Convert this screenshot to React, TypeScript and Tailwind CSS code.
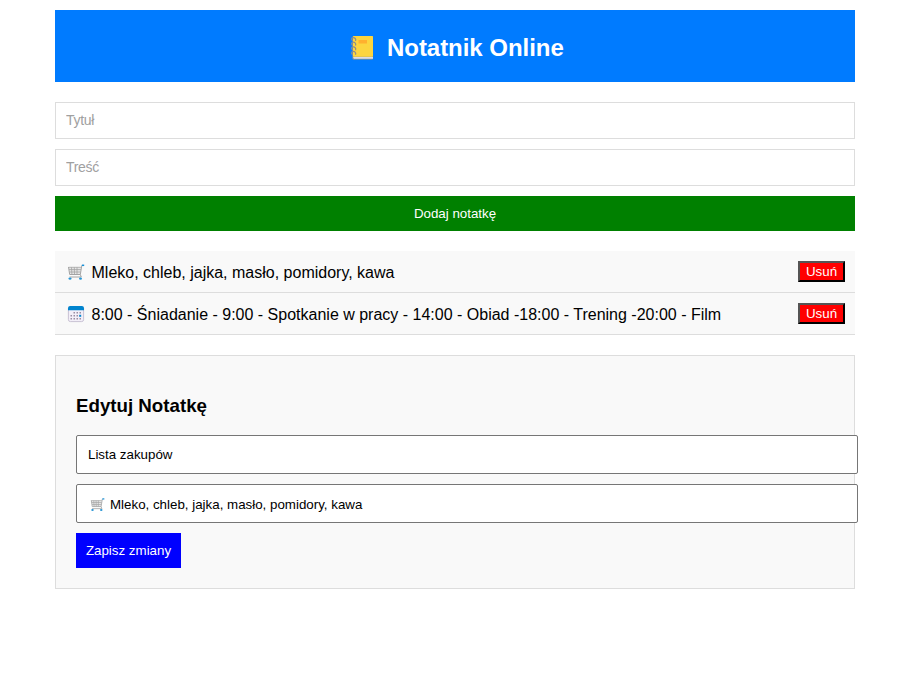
import { useState } from 'react';

function Notebook() {
  return (
    <svg className="block h-[26px] w-[26px] shrink-0" viewBox="0 0 26 26" aria-hidden="true">
      <rect x="3.5" y="1" width="20.5" height="23.5" rx="1" fill="#9b9a86" />
      <rect x="4" y="1" width="20" height="20.8" rx="0.8" fill="#fcd53f" />
      <path d="M4 22h20v1.8H5z" fill="#dcdce4" />
      <rect x="9.5" y="5" width="8.5" height="3.5" fill="#ffb02e" />
      <g fill="none" stroke="#8a8d91" strokeWidth="1.2">
        <path d="M6.5 6c1-2.4-1.2-3.8-2.7-3.3C2 3.2 2.2 5.5 4 5.600" />
        <path d="M6.5 10.6c1-2.4-1.2-3.8-2.7-3.3C2 7.8 2.2 10.1 4 10.2" />
        <path d="M6.5 15.2c1-2.4-1.2-3.8-2.7-3.3C2 12.4 2.2 14.7 4 14.8" />
        <path d="M6.5 19.8c1-2.4-1.2-3.8-2.7-3.3C2 17 2.2 19.3 4 19.400" />
      </g>
    </svg>
  );
}

function Cart({ className }: { className: string }) {
  return (
    <svg className={className} viewBox="0 0 18 18" aria-hidden="true">
      <path d="M1.500 4.200h12.500l-.7 7.300H3.500z" fill="#e6e6e6" />
      <g fill="none" stroke="#a3a3a3">
        <path d="M1.500 4.300h12.700M2 6.600h12M2.500 9h11" strokeWidth="0.8" />
        <path d="M4.500 4.300l.4 7M7.300 4.300l.2 7M10 4.300v7" strokeWidth="0.8" />
        <path d="M1.500 4l1.200 7.500h10.600L14.800 2.500h.8M13.300 11.500l1 2.500H2.500" strokeWidth="1" />
      </g>
      <path d="M14.900 2.300h2.300" stroke="#1690d8" strokeWidth="1.500" />
      <ellipse cx="3" cy="15.600" rx="1.500" ry="1.200" fill="#2795d5" />
      <ellipse cx="13.500" cy="15.600" rx="1.500" ry="1.200" fill="#2795d5" />
    </svg>
  );
}

function Calendar({ className }: { className: string }) {
  return (
    <svg className={className} viewBox="0 0 18 18" aria-hidden="true">
      <rect x="1.400" y="1.500" width="15.200" height="15.100" rx="2" fill="#f3eff8" stroke="#bdb5ca" strokeWidth="0.8" />
      <path d="M1 5.300V3.300Q1 1 3.300 1h11.400Q17 1 17 3.300v2z" fill="#0084ce" />
      <g fill="#998ea4">
        <path d="M6.500 7H8v1.500H6.500zM9.500 7H11v1.500H9.500zM12.500 7H14v1.500h-1.500z" />
        <path d="M3.500 10H5v1.500H3.500zM6.500 10H8v1.500H6.500zM9.500 10H11v1.500H9.500z" />
        <path d="M3.500 13H5v1.500H3.500zM6.500 13H8v1.500H6.500zM9.500 13H11v1.500H9.500zM12.500 13H14v1.500h-1.500z" />
      </g>
      <path d="M12.200 9.800h2v2h-2z" fill="#0084ce" />
    </svg>
  );
}

const notes = [
  { id: 1, icon: Cart, text: 'Mleko, chleb, jajka, masło, pomidory, kawa' },
  { id: 2, icon: Calendar, text: '8:00 - Śniadanie - 9:00 - Spotkanie w pracy - 14:00 - Obiad -18:00 - Trening -20:00 - Film' },
];

export default function App() {
  const [title, setTitle] = useState('Lista zakupów');
  const [body, setBody] = useState('Mleko, chleb, jajka, masło, pomidory, kawa');
  return (
    <div className="min-h-[699px] bg-white pt-[10px] pl-[55px] font-['Liberation_Sans',Arial,sans-serif] text-base text-black">
      <main className="w-[800px]">
        <header className="flex h-[72px] items-center bg-[#007bff] pt-[3px] pl-[294px] text-white">
          <Notebook />
          <h1 className="ml-3 text-2xl font-bold tracking-[-0.04px] whitespace-nowrap">Notatnik Online</h1>
        </header>
        <form className="mt-5 flex flex-col gap-[10px]" onSubmit={(e) => e.preventDefault()}>
          <input className="h-[37px] border border-[#ddd] bg-white px-[10px] pb-[2px] text-[14px] tracking-[-0.3px] outline-none placeholder:text-[#a0a0a0]" placeholder="Tytuł" />
          <input className="h-[37px] border border-[#ddd] bg-white px-[10px] pb-[2px] text-[14px] tracking-[-0.3px] outline-none placeholder:text-[#a0a0a0]" placeholder="Treść" />
          <button className="h-[35px] bg-[#008000] text-[13.333px] text-white">Dodaj notatkę</button>
        </form>
        <ul className="mt-5">
          {notes.map(({ id, icon: Icon, text }) => (
            <li key={id} className="flex h-[42px] items-center justify-between border-b border-[#ddd] bg-[#f9f9f9] pr-[10px] pl-3">
              <span className="flex items-center">
                <Icon className="mr-[6.5px] block h-[18px] w-[18px] shrink-0" />
                <span className="pt-[2px] whitespace-nowrap">{text}</span>
              </span>
              <button className="h-[21px] w-[47px] border-2 border-t-[#555] border-r-black border-b-black border-l-[#555] bg-[#ff0000] text-[13.333px] leading-[17px] text-white">Usuń</button>
            </li>
          ))}
        </ul>
        <section className="mt-5 h-[234px] border border-[#ddd] bg-[#f9f9f9] px-5 pt-[39px]">
          <h2 className="text-[18.72px] leading-[21px] font-bold">Edytuj Notatkę</h2>
          <div className="mt-[19px] h-[39px] w-[782px] rounded-[2px] border border-[#767676] bg-white">
            <input className="h-full w-full px-[11px] text-[13.333px] outline-none" value={title} onChange={(e) => setTitle(e.target.value)} />
          </div>
          <div className="mt-[10px] flex h-[39px] w-[782px] items-center rounded-[2px] border border-[#767676] bg-white pt-[2px] pl-[13px]">
            <Cart className="block h-[15px] w-[15px] shrink-0" />
            <input className="ml-[5px] h-full flex-1 text-[13.333px] outline-none" value={body} onChange={(e) => setBody(e.target.value)} />
          </div>
          <button className="mt-[10px] block h-[35px] w-[105px] bg-[#0000ff] text-[13.333px] text-white">Zapisz zmiany</button>
        </section>
      </main>
    </div>
  );
}
